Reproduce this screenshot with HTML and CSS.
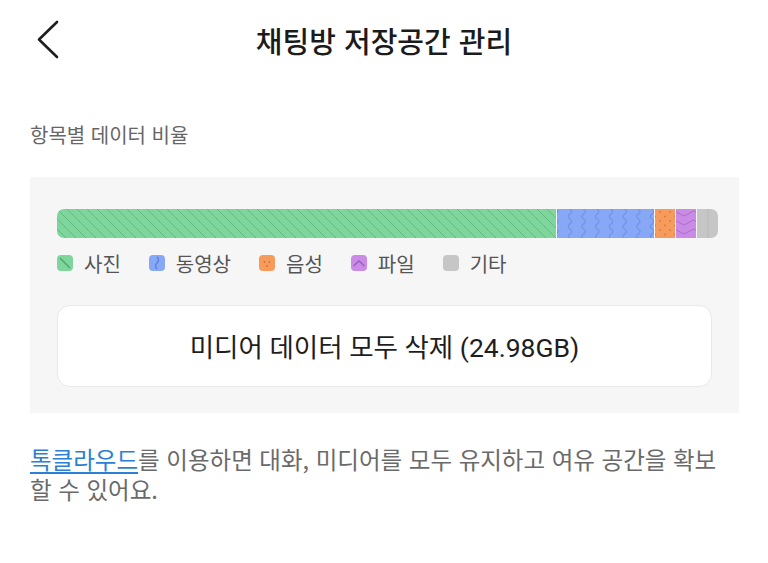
FILE: index.html
```html
<!DOCTYPE html>
<html lang="ko">
<head>
<meta charset="utf-8">
<title>채팅방 저장공간 관리</title>
<link rel="stylesheet" href="styles.css">
</head>
<body>
<header class="topbar">
  <button class="back" aria-label="뒤로">
    <svg width="24" height="40" viewBox="0 0 24 40"><polyline points="21,3 3,20.5 21,38" fill="none" stroke="#1e1e1e" stroke-width="2.6" stroke-linecap="round" stroke-linejoin="round"/></svg>
  </button>
  <h1 class="title">채팅방 저장공간 관리</h1>
</header>

<main class="content">
  <p class="section-label">항목별 데이터 비율</p>

  <section class="panel">
    <svg class="bar" width="661" height="29" viewBox="0 0 661 29">
      <defs>
        <clipPath id="barclip"><rect x="0" y="0" width="661" height="29" rx="7"/></clipPath>
        <pattern id="pGreen" width="10" height="10" patternUnits="userSpaceOnUse">
          <rect width="10" height="10" fill="#7fd69d"/>
          <path d="M-5,-5 L15,15 M-5,5 L5,15 M5,-5 L15,5" stroke="#62bb81" stroke-width="1"/>
        </pattern>
        <pattern id="pBlue" width="13.7" height="10" patternUnits="userSpaceOnUse">
          <rect width="13.7" height="10" fill="#86a8f6"/>
          <path d="M6,0 Q9.5,2.5 6,5 Q2.5,7.5 6,10" fill="none" stroke="#6b8fe4" stroke-width="1"/>
        </pattern>
        <pattern id="pOrange" width="10" height="9" patternUnits="userSpaceOnUse">
          <rect width="10" height="9" fill="#f79b5c"/>
          <circle cx="3" cy="3" r="0.9" fill="#d9773a"/>
          <circle cx="8" cy="7.5" r="0.9" fill="#d9773a"/>
        </pattern>
        <pattern id="pPurple" width="19" height="9" patternUnits="userSpaceOnUse">
          <rect width="19" height="9" fill="#c98be6"/>
          <path d="M0,7 L9.5,2 L19,7" fill="none" stroke="#ac6ccc" stroke-width="1"/>
        </pattern>
      </defs>
      <g clip-path="url(#barclip)">
        <rect x="0" y="0" width="499" height="29" fill="url(#pGreen)"/>
        <rect x="500" y="0" width="97" height="29" fill="url(#pBlue)"/>
        <rect x="598" y="0" width="20" height="29" fill="url(#pOrange)"/>
        <rect x="619" y="0" width="20" height="29" fill="url(#pPurple)"/>
        <rect x="640" y="0" width="21" height="29" fill="#c6c6c6"/>
        <line x1="651" y1="0" x2="651" y2="29" stroke="#b9b9b9" stroke-width="1"/>
      </g>
    </svg>

    <ul class="legend">
      <li class="legend-item">
        <svg class="swatch" width="16" height="16" viewBox="0 0 16 16"><rect width="16" height="16" rx="4" fill="#7fd69d"/><path d="M3,3 L13,13" stroke="#4fa870" stroke-width="1.6"/></svg>
        <span>사진</span>
      </li>
      <li class="legend-item">
        <svg class="swatch" width="16" height="16" viewBox="0 0 16 16"><rect width="16" height="16" rx="4" fill="#86a8f6"/><path d="M8,2 Q11,5 8,8 Q5,11 8,14" fill="none" stroke="#5a7fd6" stroke-width="1.3"/></svg>
        <span>동영상</span>
      </li>
      <li class="legend-item">
        <svg class="swatch" width="16" height="16" viewBox="0 0 16 16"><rect width="16" height="16" rx="4" fill="#f79b5c"/><circle cx="5.5" cy="7" r="0.9" fill="#d5702f"/><circle cx="10.5" cy="7" r="0.9" fill="#d5702f"/><circle cx="8" cy="11" r="0.9" fill="#d5702f"/></svg>
        <span>음성</span>
      </li>
      <li class="legend-item">
        <svg class="swatch" width="16" height="16" viewBox="0 0 16 16"><rect width="16" height="16" rx="4" fill="#c98be6"/><path d="M2.5,11 L8,6 L13.5,11" fill="none" stroke="#9c5ebd" stroke-width="1.3"/></svg>
        <span>파일</span>
      </li>
      <li class="legend-item">
        <svg class="swatch" width="16" height="16" viewBox="0 0 16 16"><rect width="16" height="16" rx="4" fill="#c6c6c6"/></svg>
        <span>기타</span>
      </li>
    </ul>

    <button class="delete-btn">미디어 데이터 모두 삭제 (24.98GB)</button>
  </section>

  <p class="notice"><a class="link" href="#">톡클라우드</a>를 이용하면 대화, 미디어를 모두 유지하고 여유 공간을 확보할 수 있어요.</p>
</main>
</body>
</html>
```

FILE: styles.css
```css
* { box-sizing: border-box; }

html, body {
  margin: 0;
  padding: 0;
  background: #ffffff;
}

body {
  width: 768px;
  height: 563px;
  overflow: hidden;
  font-family: "Noto Sans CJK KR", "Noto Sans", sans-serif;
  color: #1e1e1e;
}

.topbar {
  position: relative;
  height: 82px;
  display: flex;
  align-items: center;
  justify-content: center;
}

.back {
  position: absolute;
  left: 36px;
  top: 19px;
  width: 24px;
  height: 40px;
  padding: 0;
  border: 0;
  background: none;
  display: flex;
}

.title {
  margin: 0;
  margin-top: -2px;
  font-size: 29px;
  font-weight: 500;
  letter-spacing: 0;
  color: #1b1b1b;
}

.content {
  padding: 0 29px 0 30px;
}

.section-label {
  margin: 33px 0 0;
  font-size: 20px;
  line-height: 40px;
  color: #666666;
}

.panel {
  margin-top: 22px;
  width: 709px;
  background: #f6f6f6;
  padding: 32px 0 26px 27px;
}

.bar {
  display: block;
}

.legend {
  list-style: none;
  margin: 8px 0 0;
  padding: 0;
  display: flex;
  gap: 28px;
  height: 34px;
  align-items: center;
}

.legend-item {
  display: flex;
  align-items: center;
  gap: 11px;
  font-size: 20px;
  color: #555555;
}

.swatch {
  display: block;
  flex: none;
}

.delete-btn {
  display: block;
  margin-top: 25px;
  width: 655px;
  height: 82px;
  background: #ffffff;
  border: 1px solid #e9e9e9;
  border-radius: 13px;
  font-family: "Roboto", "Noto Sans CJK KR", sans-serif;
  font-size: 26.5px;
  color: #1e1e1e;
  padding: 0 0 2px;
}

.notice {
  margin: 31px 0 0;
  width: 705px;
  font-size: 23.5px;
  line-height: 30px;
  color: #6a6a6a;
}

.link {
  color: #2b7fd4;
  text-decoration: underline;
  text-underline-offset: 3px;
}
```
